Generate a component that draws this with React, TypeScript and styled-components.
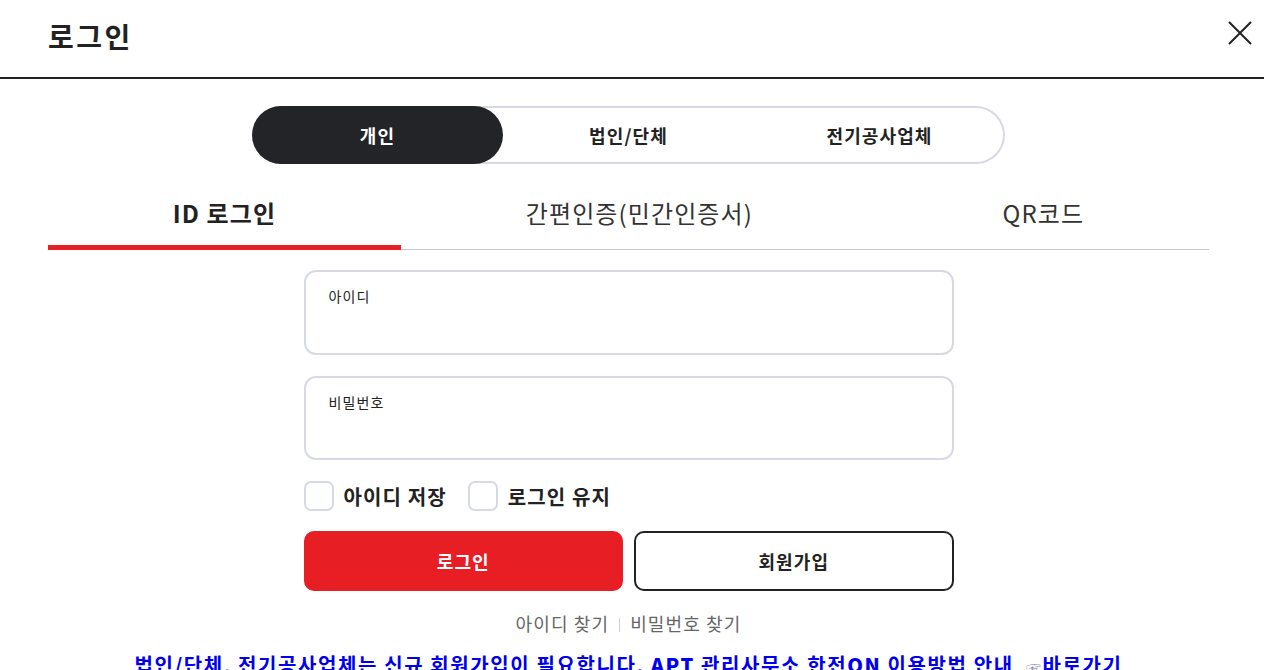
import { useState } from "react";
import styled, { createGlobalStyle } from "styled-components";

const GlobalStyle = createGlobalStyle`
  html, body {
    margin: 0;
    padding: 0;
    overflow: hidden;
    background: #ffffff;
  }
  body {
    font-family: "Noto Sans CJK KR", "Noto Sans", sans-serif;
    color: #222222;
    letter-spacing: 0.07em;
  }
  * {
    box-sizing: border-box;
  }
`;

const memberTypes = ["개인", "법인/단체", "전기공사업체"];
const loginTabs = ["ID 로그인", "간편인증(민간인증서)", "QR코드"];

export default function App() {
  const [memberType, setMemberType] = useState(0);
  const [tab, setTab] = useState(0);

  return (
    <>
      <GlobalStyle />
      <Page>
        <Header>
          <Title>로그인</Title>
          <CloseButton aria-label="닫기">
            <svg width="24" height="24" viewBox="0 0 24 24" fill="none">
              <path d="M1 1L23 23M23 1L1 23" stroke="#222" strokeWidth="2" />
            </svg>
          </CloseButton>
        </Header>

        <Body>
          <Segment>
            {memberTypes.map((label, i) => (
              <SegmentItem
                key={label}
                $active={memberType === i}
                onClick={() => setMemberType(i)}
              >
                {label}
              </SegmentItem>
            ))}
          </Segment>

          <Tabs>
            {loginTabs.map((label, i) => (
              <Tab key={label} $active={tab === i} onClick={() => setTab(i)}>
                {label}
              </Tab>
            ))}
          </Tabs>

          <Form>
            <Field>
              <FieldLabel>아이디</FieldLabel>
              <FieldInput type="text" />
            </Field>
            <Field>
              <FieldLabel>비밀번호</FieldLabel>
              <FieldInput type="password" />
            </Field>

            <CheckRow>
              <Check>
                <CheckBox type="checkbox" />
                아이디 저장
              </Check>
              <Check>
                <CheckBox type="checkbox" />
                로그인 유지
              </Check>
            </CheckRow>

            <ButtonRow>
              <Button $primary>로그인</Button>
              <Button>회원가입</Button>
            </ButtonRow>

            <FindLinks>
              <FindLink>아이디 찾기</FindLink>
              <Divider />
              <FindLink>비밀번호 찾기</FindLink>
            </FindLinks>
          </Form>

          <Notice>
            법인/단체, 전기공사업체는 신규 회원가입이 필요합니다.{" "}
            <strong>APT</strong> 관리사무소 한전<strong>ON</strong> 이용방법 안내{" "}
            <Hand>☞</Hand>바로가기
          </Notice>
        </Body>
      </Page>
    </>
  );
}

const Page = styled.div`
  width: 100%;
  min-height: 670px;
`;

const Header = styled.header`
  height: 79px;
  display: flex;
  align-items: center;
  justify-content: space-between;
  padding: 0 12px 6px 48px;
  border-bottom: 2px solid #222222;
`;

const Title = styled.h1`
  margin: 0;
  font-size: 28px;
  font-weight: 700;
  color: #222222;
  letter-spacing: 0.09em;
`;

const CloseButton = styled.button`
  border: 0;
  background: none;
  padding: 0;
  width: 24px;
  height: 24px;
  margin-top: -6px;
  cursor: pointer;
  display: flex;
`;

const Body = styled.main`
  padding: 27px 55px 0 48px;
  display: flex;
  flex-direction: column;
  align-items: center;
`;

const Segment = styled.div`
  width: 753px;
  height: 58px;
  display: flex;
  border-radius: 29px;
  box-shadow: inset 0 0 0 2px #d7dae4;
`;

const SegmentItem = styled.button<{ $active?: boolean }>`
  flex: 1;
  border: 0;
  border-radius: 29px;
  font-family: inherit;
  letter-spacing: inherit;
  font-size: 18px;
  font-weight: 700;
  cursor: pointer;
  background: ${(p) => (p.$active ? "#232428" : "transparent")};
  color: ${(p) => (p.$active ? "#ffffff" : "#222222")};
`;

const Tabs = styled.div`
  align-self: stretch;
  display: flex;
  margin-top: 16px;
  border-bottom: 1px solid #c4c7d2;
`;

const Tab = styled.button<{ $active?: boolean }>`
  flex: 1 1 auto;
  height: 70px;
  margin-bottom: -1px;
  border: 0;
  border-bottom: 5px solid ${(p) => (p.$active ? "#e81e25" : "transparent")};
  background: none;
  font-family: inherit;
  letter-spacing: inherit;
  font-size: 24px;
  font-weight: ${(p) => (p.$active ? 700 : 400)};
  color: ${(p) => (p.$active ? "#222222" : "#333333")};
  cursor: pointer;
  padding: 0;
  white-space: nowrap;
`;

const Form = styled.div`
  width: 650px;
  margin-top: 20px;
  display: flex;
  flex-direction: column;
`;

const Field = styled.label`
  height: 85px;
  border: 2px solid #d7dae4;
  border-radius: 12px;
  padding: 13px 23px 0;
  display: flex;
  flex-direction: column;
  & + & {
    margin-top: 21px;
    height: 84px;
  }
`;

const FieldLabel = styled.span`
  font-size: 14px;
  color: #222222;
  line-height: 22px;
`;

const FieldInput = styled.input`
  border: 0;
  outline: none;
  font-family: inherit;
  font-size: 18px;
  padding: 6px 0;
  background: transparent;
`;

const CheckRow = styled.div`
  display: flex;
  gap: 21px;
  margin-top: 21px;
`;

const Check = styled.label`
  display: flex;
  align-items: center;
  gap: 10px;
  font-size: 20px;
  font-weight: 700;
  color: #222222;
  cursor: pointer;
`;

const CheckBox = styled.input`
  appearance: none;
  margin: 0;
  width: 30px;
  height: 30px;
  border: 2px solid #d7dae4;
  border-radius: 7px;
  background: #ffffff;
  cursor: pointer;
  &:checked {
    background: #232428;
    border-color: #232428;
  }
`;

const ButtonRow = styled.div`
  display: grid;
  grid-template-columns: 1fr 1fr;
  gap: 11px;
  margin-top: 20px;
`;

const Button = styled.button<{ $primary?: boolean }>`
  height: 60px;
  border-radius: 10px;
  font-family: inherit;
  letter-spacing: inherit;
  font-size: 18px;
  font-weight: 700;
  cursor: pointer;
  border: 2px solid ${(p) => (p.$primary ? "#e81e25" : "#222222")};
  background: ${(p) => (p.$primary ? "#e81e25" : "#ffffff")};
  color: ${(p) => (p.$primary ? "#ffffff" : "#222222")};
`;

const FindLinks = styled.div`
  display: flex;
  justify-content: center;
  align-items: center;
  gap: 10px;
  margin-top: 19px;
  font-size: 18px;
  color: #666666;
`;

const FindLink = styled.a`
  cursor: pointer;
`;

const Divider = styled.span`
  width: 1px;
  height: 14px;
  background: #d0d0d0;
  margin-top: 4px;
`;

const Notice = styled.p`
  margin: 14px 0 0;
  font-size: 20px;
  font-weight: 700;
  color: #0000ee;
  letter-spacing: 0.08em;
  white-space: nowrap;
  text-align: center;
  strong {
    font-weight: 900;
  }
`;

const Hand = styled.span`
  font-size: 15px;
  color: #8a8ab0;
  margin-left: 6px;
`;
